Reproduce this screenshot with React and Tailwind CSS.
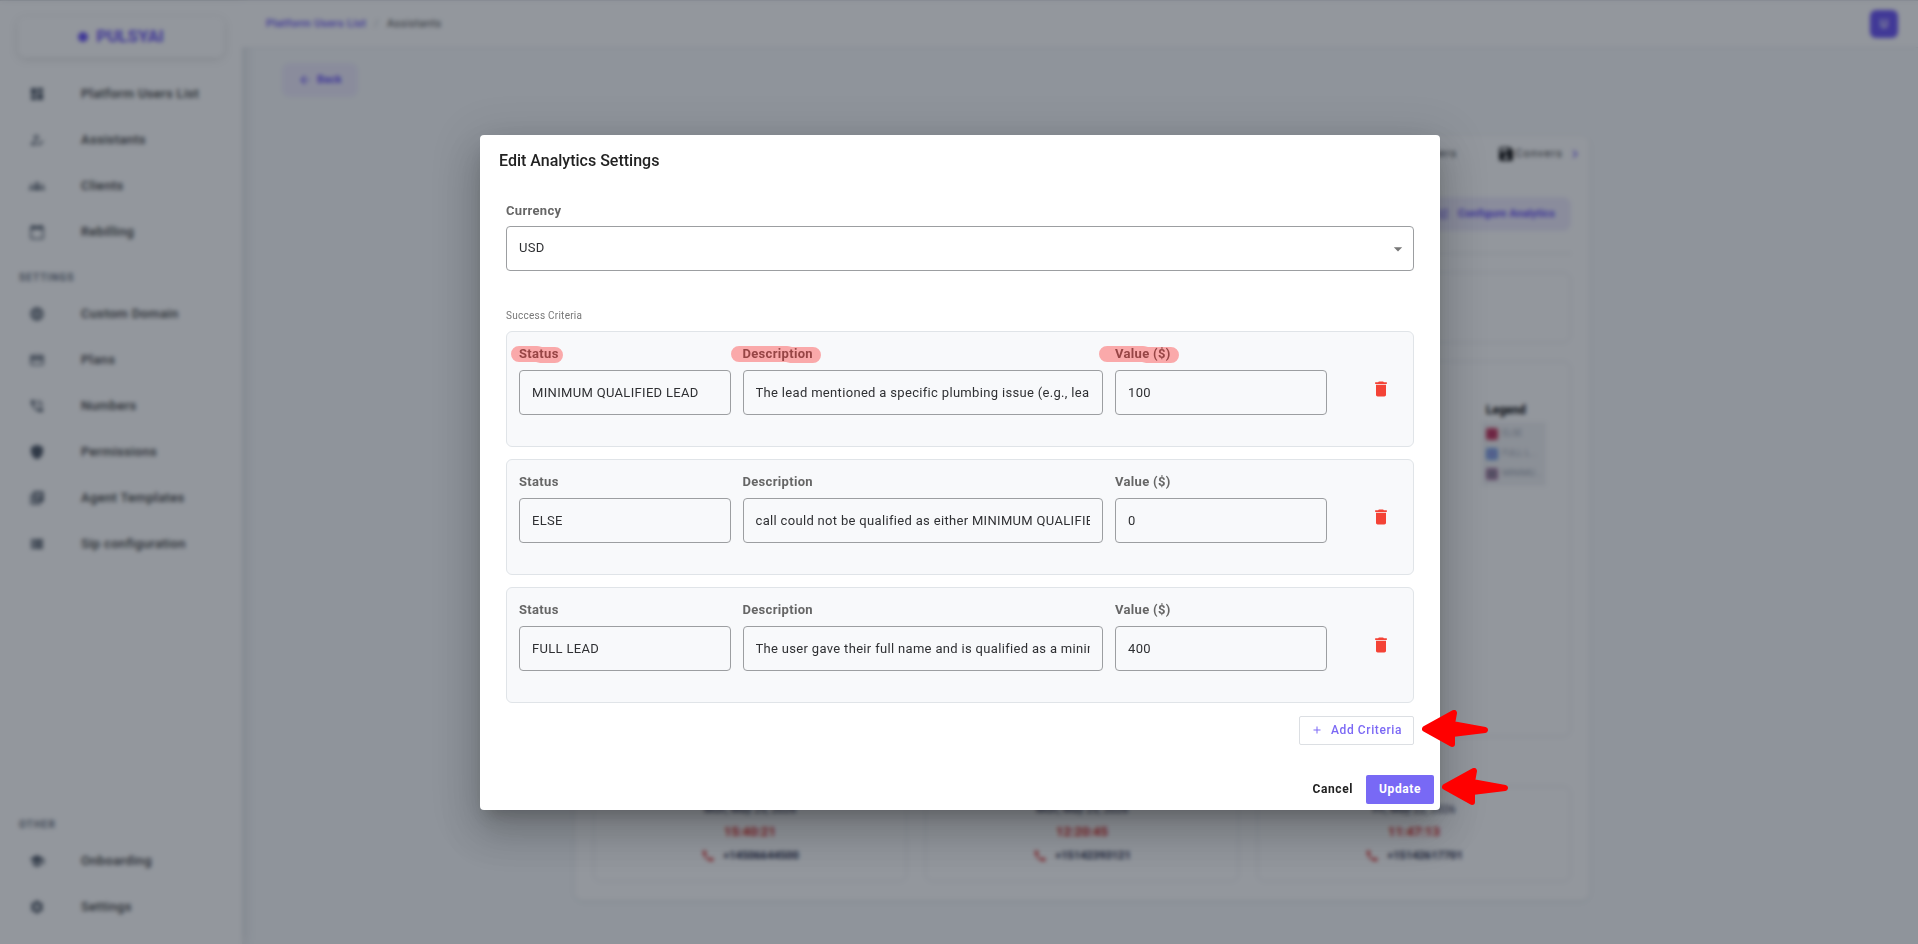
import {
  MdAdd,
  MdArrowBack,
  MdArrowDropDown,
  MdCall,
  MdChevronRight,
  MdCreditCard,
  MdDashboard,
  MdDelete,
  MdCalendarToday,
  MdGroups,
  MdLanguage,
  MdLibraryBooks,
  MdOutlineHowToReg,
  MdPhoneInTalk,
  MdSave,
  MdSchool,
  MdSettings,
  MdShield,
  MdTune,
  MdViewList,
} from "react-icons/md";

const mainMenu = [
  { label: "Platform Users List", Icon: MdDashboard },
  { label: "Assistants", Icon: MdOutlineHowToReg },
  { label: "Clients", Icon: MdGroups },
  { label: "Rebilling", Icon: MdCalendarToday },
];

const settingsMenu = [
  { label: "Custom Domain", Icon: MdLanguage },
  { label: "Plans", Icon: MdCreditCard },
  { label: "Numbers", Icon: MdPhoneInTalk },
  { label: "Permissions", Icon: MdShield },
  { label: "Agent Templates", Icon: MdLibraryBooks },
  { label: "Sip configuration", Icon: MdViewList },
];

const otherMenu = [
  { label: "Onboarding", Icon: MdSchool },
  { label: "Settings", Icon: MdSettings },
];

const legend = [
  { label: "ELSE", swatch: "bg-[#b8305f] border-[#d03a5a]" },
  { label: "FULL L...", swatch: "bg-[#8f9be0] border-[#6f9fe6]" },
  { label: "MINIMU...", swatch: "bg-[#8a7f95] border-[#a9719f]" },
];

const calls = [
  { date: "Mon, May 25, 2026", time: "15:40:21", phone: "+14506644500" },
  { date: "Mon, May 25, 2026", time: "12:20:45", phone: "+15142393121" },
  { date: "Fri, May 22, 2026", time: "11:47:13", phone: "+15142617701" },
];

const criteria = [
  {
    status: "MINIMUM QUALIFIED LEAD",
    description:
      "The lead mentioned a specific plumbing issue (e.g., leak, clogged drain)",
    value: "100",
    marked: true,
  },
  {
    status: "ELSE",
    description:
      "call could not be qualified as either MINIMUM QUALIFIED LEAD or FULL LEAD",
    value: "0",
  },
  {
    status: "FULL LEAD",
    description:
      "The user gave their full name and is qualified as a minimum qualified lead",
    value: "400",
  },
];

const MenuList = ({ items }) => (
  <ul>
    {items.map(({ label, Icon }) => (
      <li key={label}>
        <a href="#" className="flex h-[46px] items-center pl-[29px]">
          <Icon className="size-4 text-[#4b5563]" />
          <span className="pl-9 text-[13px] font-medium tracking-wide text-[#3d3d3d]">
            {label}
          </span>
        </a>
      </li>
    ))}
  </ul>
);

const MenuHeading = ({ children }) => (
  <h2 className="flex h-9 items-end pb-1.5 pl-[19px] text-[10px] font-bold tracking-widest text-[#6b7280]">
    {children}
  </h2>
);

const Sidebar = () => (
  <aside className="flex w-[242px] shrink-0 flex-col bg-white pb-3.5 shadow-[2px_0_12px_rgba(0,0,0,0.12)]">
    <div className="mx-[18px] mt-4 mb-3.5 flex h-10 items-center justify-center gap-2 rounded-lg bg-white text-[17px] font-bold text-[#6a54f5] shadow-[0_2px_10px_rgba(0,0,0,0.12)]">
      <span className="size-[10px] rounded-full bg-[#6a54f5]" />
      PULSYAI
    </div>
    <nav className="flex grow flex-col">
      <MenuList items={mainMenu} />
      <MenuHeading>SETTINGS</MenuHeading>
      <MenuList items={settingsMenu} />
      <div className="mt-auto">
        <MenuHeading>OTHER</MenuHeading>
        <MenuList items={otherMenu} />
      </div>
    </nav>
  </aside>
);

const Header = () => (
  <header className="flex h-[47px] shrink-0 items-center border-b border-[#e9ebf0] bg-white pr-5 pl-6">
    <nav className="flex grow items-center text-[11px] tracking-wide">
      <a href="#" className="font-medium text-[#6a54f5]">
        Platform Users List
      </a>
      <span className="px-2 text-[#c0c4cc]">/</span>
      <span className="text-[#4b4b4b]">Assistants</span>
    </nav>
    <button className="size-7 rounded-md bg-[#6a54f5] text-xs font-medium text-white">
      U
    </button>
  </header>
);

const AnalyticsPage = () => (
  <main className="flex grow flex-col items-center pl-1">
    <div className="flex w-full px-9 pt-[15px] pb-[39px]">
      <button className="flex h-[34px] items-center gap-[5px] rounded-lg bg-[#efecfe] px-4 text-[11px] font-bold text-[#6a54f5]">
        <MdArrowBack className="size-3.5" />
        Back
      </button>
    </div>
    <section className="w-full max-w-[1014px] rounded-lg bg-white px-[18px] pb-[18px] shadow-[0_1px_4px_rgba(0,0,0,0.08)]">
      <div className="-mr-3 flex h-9 items-center justify-end text-[11px] tracking-widest text-[#333]">
        <span className="pr-10">Numbers</span>
        <MdSave className="size-[18px] text-black" />
        <span>Convers</span>
        <MdChevronRight className="ml-1 size-4 text-[#6a54f5]" />
      </div>
      <div className="flex justify-end border-b border-[#e5e7eb] pt-[25px] pb-[22px]">
        <button className="flex h-[34px] items-center gap-2 rounded-lg bg-[#efecfe] px-4 text-[11px] font-bold text-[#6a54f5]">
          <MdTune className="size-3.5" />
          Configure Analytics
        </button>
      </div>
      <div className="mt-[18px] h-[71px] rounded-lg border border-[#e8eaef]" />
      <div className="mt-[18px] flex h-[376px] justify-end rounded-lg border border-[#e8eaef] pt-10 pr-6">
        <div>
          <h3 className="pl-1 text-xs font-bold text-black">Legend</h3>
          <ul className="mt-1 w-16 bg-[#f1f2f4] px-1 py-0.5">
            {legend.map(({ label, swatch }) => (
              <li
                key={label}
                className="flex h-5 items-center gap-1 text-[9px] whitespace-nowrap text-[#a3a9b5]"
              >
                <span
                  className={`size-3 shrink-0 rounded-xs border-2 ${swatch}`}
                />
                {label}
              </li>
            ))}
          </ul>
        </div>
      </div>
      <div className="mt-[49px] grid grid-cols-3 gap-[18px]">
        {calls.map(({ date, time, phone }) => (
          <div
            key={phone}
            className="flex h-24 flex-col items-center rounded-lg border border-[#e8eaef] pt-[15px] text-[#1a2342]"
          >
            <span className="text-[11px] leading-4">{date}</span>
            <span className="pt-1 text-[13px] leading-5 font-bold text-[#dc2626]">
              {time}
            </span>
            <span className="flex items-center gap-2 pt-1 text-[11px] leading-5 font-bold">
              <MdCall className="size-3.5 text-[#dc2626]" />
              {phone}
            </span>
          </div>
        ))}
      </div>
    </section>
  </main>
);

// Marker stroke over a column label, with a slight bend like a hand-drawn line
const Marker = ({ width, bend, className }) => (
  <svg
    className={`pointer-events-none absolute ${className}`}
    width={width}
    height="18"
    viewBox={`0 0 ${width} 18`}
    fill="none"
  >
    <path
      d={`M8 8 H${bend} L${bend + 4} 9 H${width - 8}`}
      stroke="#ff0000"
      strokeOpacity="0.32"
      strokeWidth="16"
      strokeLinecap="round"
      strokeLinejoin="round"
    />
  </svg>
);

const Arrow = ({ className }) => (
  <svg
    className={`pointer-events-none absolute h-[38px] w-[67px] ${className}`}
    viewBox="0 0 67 38"
  >
    <path
      d="M3 19 L32 3 L30 14 L63 20 L30 24 L30 34 Z"
      fill="#ff0000"
      stroke="#ff0000"
      strokeWidth="6"
      strokeLinejoin="round"
    />
  </svg>
);

const Field = ({ id, label, value, className, children }) => (
  <div className={`relative ${className}`}>
    <label
      htmlFor={id}
      className="block pb-1.5 text-[13px] leading-5 font-bold tracking-wide text-[#666]"
    >
      {label}
    </label>
    {children}
    <input
      id={id}
      type="text"
      defaultValue={value}
      className="h-[45px] w-full rounded-sm border border-[#9c9ea1] px-3 text-[13px] tracking-wide text-[#2f3033]"
    />
  </div>
);

const CriteriaRow = ({ index, status, description, value, marked }) => (
  <div className="grid grid-cols-12 gap-3 rounded-md border border-[#e0e4e8] bg-[#f8f9fb] px-3 pt-3 pb-[31px]">
    <Field
      id={`status-${index}`}
      label="Status"
      value={status}
      className="col-span-3"
    >
      {marked && <Marker width={52} bend={26} className="top-0.5 -left-2" />}
    </Field>
    <Field
      id={`description-${index}`}
      label="Description"
      value={description}
      className="col-span-5"
    >
      {marked && <Marker width={90} bend={56} className="top-0.5 -left-3" />}
    </Field>
    <Field
      id={`value-${index}`}
      label="Value ($)"
      value={value}
      className="col-span-3"
    >
      {marked && <Marker width={80} bend={44} className="top-0.5 -left-4" />}
    </Field>
    <div className="flex items-center justify-end pt-5 pr-2.5">
      <button aria-label="Delete criteria" className="text-[#f44336]">
        <MdDelete className="size-5" />
      </button>
    </div>
  </div>
);

const EditAnalyticsDialog = () => (
  <div
    role="dialog"
    aria-labelledby="dialog-title"
    className="w-full max-w-[960px] rounded-sm bg-white shadow-[0_11px_15px_-7px_rgba(0,0,0,0.2),0_24px_38px_3px_rgba(0,0,0,0.14),0_9px_46px_8px_rgba(0,0,0,0.12)]"
  >
    <h1
      id="dialog-title"
      className="px-[19px] pt-3.5 pb-[30px] text-base font-medium text-[#222]"
    >
      Edit Analytics Settings
    </h1>
    <div className="px-[26px]">
      <label
        htmlFor="currency"
        className="block pb-[7px] text-[13px] leading-4 font-bold tracking-wide text-[#666]"
      >
        Currency
      </label>
      <div className="relative">
        <select
          id="currency"
          className="block h-[45px] w-full appearance-none rounded-sm border border-[#9c9ea1] px-3 text-[13px] tracking-wide text-[#2f3033]"
        >
          <option>USD</option>
        </select>
        <MdArrowDropDown className="pointer-events-none absolute top-[13px] right-1.5 size-5 text-[#777]" />
      </div>

      <p className="pt-[37px] pb-[7px] text-[10px] leading-4 tracking-wide text-[#777]">
        Success Criteria
      </p>
      <div className="flex flex-col gap-3">
        {criteria.map((item, i) => (
          <CriteriaRow key={item.status} index={i} {...item} />
        ))}
      </div>
      <div className="flex justify-end pt-[13px]">
        <div className="relative">
          <button className="flex h-[29px] items-center gap-2 rounded-xs border border-[#dcdfe3] px-[11px] text-xs font-medium tracking-wider text-[#7c69f5]">
            <MdAdd className="size-3" />
            Add Criteria
          </button>
          <Arrow className="-top-1.5 left-full ml-2" />
        </div>
      </div>
    </div>
    <div className="flex items-center justify-end gap-[13px] px-1.5 pt-[30px] pb-1.5">
      <button className="text-xs font-bold tracking-wider text-[#222]">
        Cancel
      </button>
      <div className="relative">
        <button className="block h-[29px] rounded-xs bg-[#7869f5] px-[13px] text-xs font-bold tracking-wider text-white">
          Update
        </button>
        <Arrow className="-top-[7px] left-full ml-2" />
      </div>
    </div>
  </div>
);

const App = () => {
  return (
    <div className="font-[Roboto,sans-serif]">
      <div className="flex min-h-screen border-t border-[#dfe0e4] bg-[#f7f9fb]">
        <Sidebar />
        <div className="flex grow flex-col">
          <Header />
          <AnalyticsPage />
        </div>
      </div>
      <div className="fixed inset-0 flex items-center justify-center bg-[rgba(16,24,38,0.45)] pl-0.5 backdrop-blur-[2px]">
        <EditAnalyticsDialog />
      </div>
    </div>
  );
};

export default App;
